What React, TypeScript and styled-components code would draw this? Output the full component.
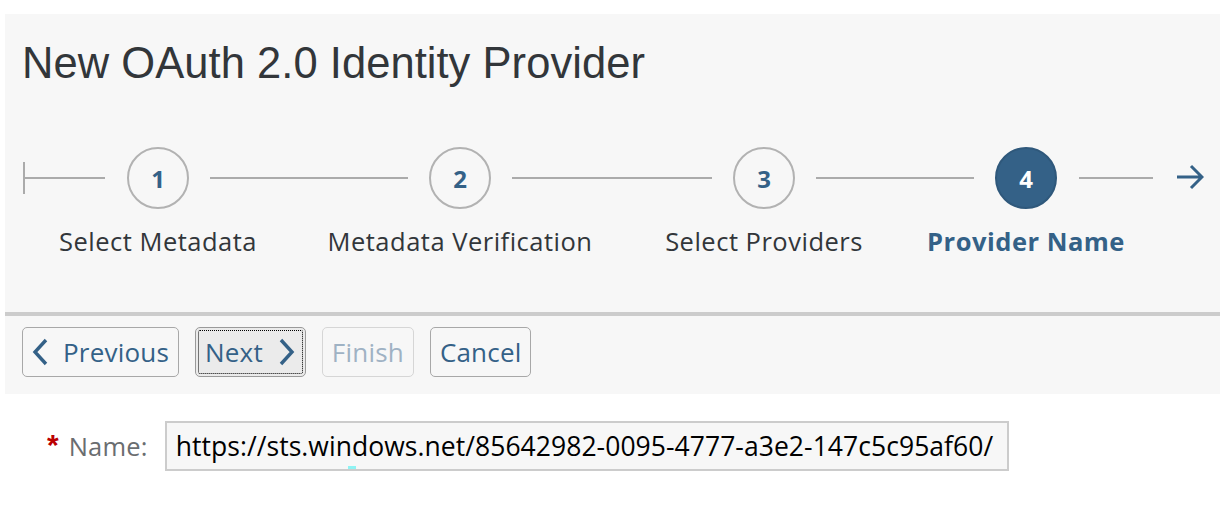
import React from "react";
import styled, { createGlobalStyle } from "styled-components";

const GlobalStyle = createGlobalStyle`
  html, body { margin: 0; padding: 0; background: #ffffff; }
  body { font-family: "Open Sans", "Liberation Sans", Arial, sans-serif; }
  * { box-sizing: border-box; }
`;

const BLUE = "#346187";
const TEXT = "#32363a";
const LINE = "#ababab";

const Page = styled.div`
  padding: 14px 0 0 5px;
  width: 1220px;
`;

const Header = styled.header`
  background: #f7f7f7;
  padding: 23px 0 55px 17px;
  border-bottom: 4px solid #cccccc;
`;

const Title = styled.h1`
  margin: 0;
  font-family: "Liberation Sans", Arial, sans-serif;
  font-weight: 400;
  font-size: 43.5px;
  line-height: 52px;
  letter-spacing: 0.05px;
  color: ${TEXT};
`;

const Stepper = styled.div`
  display: flex;
  align-items: flex-start;
  margin-top: 58px;
  padding-left: 1px;
`;

const StartTick = styled.span`
  width: 2px;
  height: 32px;
  margin-top: 15px;
  background: ${LINE};
  flex: none;
`;

const Connector = styled.span<{ $w: number; $ml?: number; $mr?: number }>`
  flex: none;
  width: ${(p) => p.$w}px;
  height: 2px;
  margin-top: 30px;
  margin-left: ${(p) => p.$ml ?? 21}px;
  margin-right: ${(p) => p.$mr ?? 21}px;
  background: ${LINE};
`;

const Step = styled.div`
  flex: none;
  width: 62px;
  display: flex;
  flex-direction: column;
  align-items: center;
`;

const Circle = styled.div<{ $active?: boolean }>`
  width: 62px;
  height: 62px;
  border-radius: 50%;
  border: 2px solid ${(p) => (p.$active ? "#2f587b" : "#b2b2b2")};
  background: ${(p) => (p.$active ? BLUE : "#f7f7f7")};
  color: ${(p) => (p.$active ? "#ffffff" : BLUE)};
  display: flex;
  align-items: center;
  justify-content: center;
  font-family: "Open Sans", "Liberation Sans", sans-serif;
  font-weight: 700;
  font-size: 24px;
`;

const StepLabel = styled.div<{ $active?: boolean }>`
  margin-top: 16px;
  white-space: nowrap;
  font-size: 25.5px;
  line-height: 32px;
  letter-spacing: 0.5px;
  font-weight: ${(p) => (p.$active ? 700 : 400)};
  color: ${(p) => (p.$active ? BLUE : TEXT)};
`;

const ArrowWrap = styled.span`
  flex: none;
  margin-top: 17px;
  color: ${BLUE};
  display: flex;
`;

const Toolbar = styled.div`
  background: #f7f7f7;
  display: flex;
  gap: 16px;
  padding: 11px 17px 17px;
`;

const Button = styled.button<{ $focused?: boolean }>`
  height: 50px;
  display: inline-flex;
  align-items: center;
  gap: 15px;
  padding: 0 9px;
  border-radius: 5px;
  border: 1px solid ${(p) => (p.$focused ? "#9a9a9a" : "#a8a8a8")};
  background: ${(p) => (p.$focused ? "#ebebeb" : "#f7f7f7")};
  color: ${BLUE};
  font-family: "Open Sans", "Liberation Sans", sans-serif;
  font-size: 26px;
  letter-spacing: 0.2px;
  cursor: pointer;
  outline: ${(p) => (p.$focused ? "1.5px dotted #000" : "none")};
  outline-offset: -4px;
  &:disabled {
    color: #9fb2c4;
    border-color: #d6d6d6;
    cursor: default;
  }
`;

const Form = styled.div`
  display: flex;
  align-items: center;
  padding: 27px 0 0 42px;
`;

const Required = styled.span`
  font-family: "Liberation Sans", Arial, sans-serif;
  font-weight: 700;
  font-size: 30px;
  color: #bb0000;
  margin-top: -2px;
  margin-right: 10px;
`;

const FieldLabel = styled.label`
  font-size: 25.5px;
  letter-spacing: 0.2px;
  color: #6a6d70;
  margin-right: 17px;
`;

const InputWrap = styled.div`
  position: relative;
  display: flex;
`;

const Input = styled.input`
  width: 844px;
  height: 50px;
  border: 2px solid #cccccc;
  background: #f7f7f7;
  padding: 0 9px;
  font-family: "Open Sans", "Liberation Sans", sans-serif;
  font-size: 26.5px;
  letter-spacing: 0.05px;
  color: #000000;
  outline: none;
`;

const CaretMark = styled.span`
  position: absolute;
  left: 183px;
  bottom: 2px;
  width: 8px;
  height: 3px;
  background: #8ff3f3;
`;

const ChevronLeft = () => (
  <svg width="16" height="28" viewBox="0 0 16 28" fill="none">
    <path d="M14 2 L3 14 L14 26" stroke="currentColor" strokeWidth="3.4" />
  </svg>
);

const ChevronRight = () => (
  <svg width="18" height="28" viewBox="0 0 18 28" fill="none">
    <path d="M3 2 L14 14 L3 26" stroke="currentColor" strokeWidth="3.4" />
  </svg>
);

const ArrowRight = () => (
  <svg width="28" height="26" viewBox="0 0 28 26" fill="none">
    <path d="M1 13 H26 M15 2 L26 13 L15 24" stroke="currentColor" strokeWidth="3" />
  </svg>
);

const steps = [
  { n: 1, label: "Select Metadata", after: 198 },
  { n: 2, label: "Metadata Verification", after: 200 },
  { n: 3, label: "Select Providers", after: 158 },
  { n: 4, label: "Provider Name", after: 74, active: true },
];

export default function App() {
  return (
    <>
      <GlobalStyle />
      <Page>
        <Header>
          <Title>New OAuth 2.0 Identity Provider</Title>
          <Stepper>
            <StartTick />
            <Connector $w={80} $ml={0} $mr={22} />
            {steps.map((s, i) => (
              <React.Fragment key={s.n}>
                <Step>
                  <Circle $active={s.active}>{s.n}</Circle>
                  <StepLabel $active={s.active}>{s.label}</StepLabel>
                </Step>
                <Connector
                  $w={s.after}
                  $ml={i === 3 ? 22 : 21}
                  $mr={i === 3 ? 23 : 21}
                />
              </React.Fragment>
            ))}
            <ArrowWrap>
              <ArrowRight />
            </ArrowWrap>
          </Stepper>
        </Header>
        <Toolbar>
          <Button>
            <ChevronLeft />
            Previous
          </Button>
          <Button $focused>
            Next
            <ChevronRight />
          </Button>
          <Button disabled>Finish</Button>
          <Button>Cancel</Button>
        </Toolbar>
        <Form>
          <Required>*</Required>
          <FieldLabel htmlFor="name">Name:</FieldLabel>
          <InputWrap>
            <Input
              id="name"
              readOnly
              value="https://sts.windows.net/85642982-0095-4777-a3e2-147c5c95af60/"
            />
            <CaretMark />
          </InputWrap>
        </Form>
      </Page>
    </>
  );
}
